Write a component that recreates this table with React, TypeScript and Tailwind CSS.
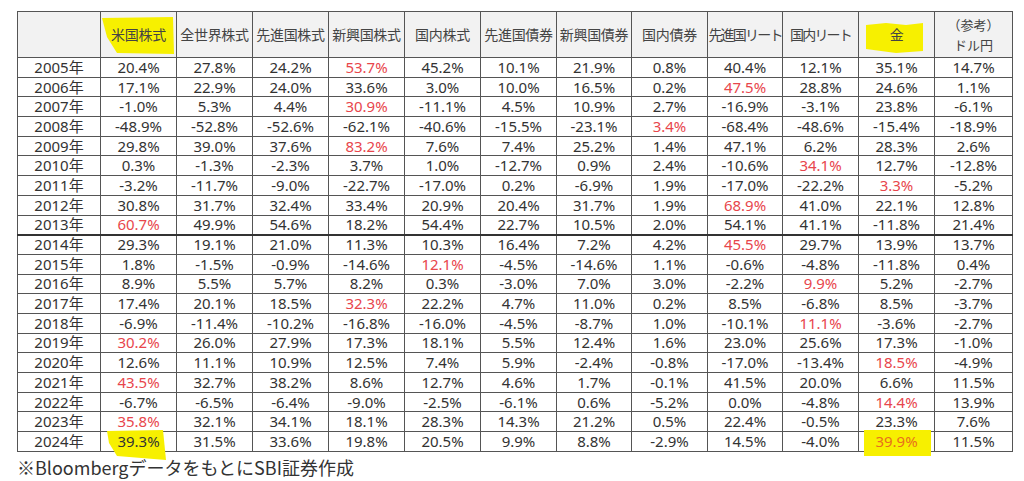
import React from "react";

const headers = ["米国株式", "全世界株式", "先進国株式", "新興国株式", "国内株式", "先進国債券", "新興国債券", "国内債券", "先進国リート", "国内リート", "金"];

const widths = [83, 76, 76, 76, 76, 76, 76, 75, 76, 75, 76, 76, 78];

// [year, values..., index of the red cell]
const rows: [string, string[], number][] = [
  ["2005年", ["20.4%", "27.8%", "24.2%", "53.7%", "45.2%", "10.1%", "21.9%", "0.8%", "40.4%", "12.1%", "35.1%", "14.7%"], 3],
  ["2006年", ["17.1%", "22.9%", "24.0%", "33.6%", "3.0%", "10.0%", "16.5%", "0.2%", "47.5%", "28.8%", "24.6%", "1.1%"], 8],
  ["2007年", ["-1.0%", "5.3%", "4.4%", "30.9%", "-11.1%", "4.5%", "10.9%", "2.7%", "-16.9%", "-3.1%", "23.8%", "-6.1%"], 3],
  ["2008年", ["-48.9%", "-52.8%", "-52.6%", "-62.1%", "-40.6%", "-15.5%", "-23.1%", "3.4%", "-68.4%", "-48.6%", "-15.4%", "-18.9%"], 7],
  ["2009年", ["29.8%", "39.0%", "37.6%", "83.2%", "7.6%", "7.4%", "25.2%", "1.4%", "47.1%", "6.2%", "28.3%", "2.6%"], 3],
  ["2010年", ["0.3%", "-1.3%", "-2.3%", "3.7%", "1.0%", "-12.7%", "0.9%", "2.4%", "-10.6%", "34.1%", "12.7%", "-12.8%"], 9],
  ["2011年", ["-3.2%", "-11.7%", "-9.0%", "-22.7%", "-17.0%", "0.2%", "-6.9%", "1.9%", "-17.0%", "-22.2%", "3.3%", "-5.2%"], 10],
  ["2012年", ["30.8%", "31.7%", "32.4%", "33.4%", "20.9%", "20.4%", "31.7%", "1.9%", "68.9%", "41.0%", "22.1%", "12.8%"], 8],
  ["2013年", ["60.7%", "49.9%", "54.6%", "18.2%", "54.4%", "22.7%", "10.5%", "2.0%", "54.1%", "41.1%", "-11.8%", "21.4%"], 0],
  ["2014年", ["29.3%", "19.1%", "21.0%", "11.3%", "10.3%", "16.4%", "7.2%", "4.2%", "45.5%", "29.7%", "13.9%", "13.7%"], 8],
  ["2015年", ["1.8%", "-1.5%", "-0.9%", "-14.6%", "12.1%", "-4.5%", "-14.6%", "1.1%", "-0.6%", "-4.8%", "-11.8%", "0.4%"], 4],
  ["2016年", ["8.9%", "5.5%", "5.7%", "8.2%", "0.3%", "-3.0%", "7.0%", "3.0%", "-2.2%", "9.9%", "5.2%", "-2.7%"], 9],
  ["2017年", ["17.4%", "20.1%", "18.5%", "32.3%", "22.2%", "4.7%", "11.0%", "0.2%", "8.5%", "-6.8%", "8.5%", "-3.7%"], 3],
  ["2018年", ["-6.9%", "-11.4%", "-10.2%", "-16.8%", "-16.0%", "-4.5%", "-8.7%", "1.0%", "-10.1%", "11.1%", "-3.6%", "-2.7%"], 9],
  ["2019年", ["30.2%", "26.0%", "27.9%", "17.3%", "18.1%", "5.5%", "12.4%", "1.6%", "23.0%", "25.6%", "17.3%", "-1.0%"], 0],
  ["2020年", ["12.6%", "11.1%", "10.9%", "12.5%", "7.4%", "5.9%", "-2.4%", "-0.8%", "-17.0%", "-13.4%", "18.5%", "-4.9%"], 10],
  ["2021年", ["43.5%", "32.7%", "38.2%", "8.6%", "12.7%", "4.6%", "1.7%", "-0.1%", "41.5%", "20.0%", "6.6%", "11.5%"], 0],
  ["2022年", ["-6.7%", "-6.5%", "-6.4%", "-9.0%", "-2.5%", "-6.1%", "0.6%", "-5.2%", "0.0%", "-4.8%", "14.4%", "13.9%"], 10],
  ["2023年", ["35.8%", "32.1%", "34.1%", "18.1%", "28.3%", "14.3%", "21.2%", "0.5%", "22.4%", "-0.5%", "23.3%", "7.6%"], 0],
  ["2024年", ["39.3%", "31.5%", "33.6%", "19.8%", "20.5%", "9.9%", "8.8%", "-2.9%", "14.5%", "-4.0%", "39.9%", "11.5%"], 10],
];

const font = { fontFamily: '"Noto Sans", "Noto Sans CJK JP", sans-serif' };

function Marker({ points, className }: { points: string; className: string }) {
  return (
    <svg className={`absolute pointer-events-none ${className}`} width="80" height="50" viewBox="0 0 80 50">
      <polygon points={points} fill="#f7f000" />
    </svg>
  );
}

export default function App() {
  return (
    <div className="w-[1024px] h-[481px] bg-white text-[#333] pl-[17px] pt-[11px]" style={font}>
      <table className="table-fixed border-collapse w-[995px] text-[15px] leading-none">
        <colgroup>
          {widths.map((w, i) => (
            <col key={i} style={{ width: w }} />
          ))}
        </colgroup>
        <thead>
          <tr className="h-[46px] bg-[#f2f2f2] text-[#444] text-[14px]">
            <th className="border border-[#555]"></th>
            {headers.map((h, i) => (
              <th
                key={h}
                className={`relative border border-[#555] font-normal whitespace-nowrap ${h.includes("リート") ? "tracking-[-1.8px]" : "tracking-[-0.3px]"}`}
              >
                {i === 0 && <Marker className="left-0 top-[3px]" points="1,3 72,2 73,39 16,38 6,22" />}
                {i === 10 && <Marker className="left-[7px] top-[11px]" points="0,2 20,0 40,2 57,0 57,28 30,30 0,26" />}
                <span className="relative">{h}</span>
              </th>
            ))}
            <th className="border border-[#555] font-normal text-[13px] leading-[20px]" style={{ fontFamily: '"Noto Sans CJK JP", sans-serif' }}>
              （参考）
              <br />
              ドル円
            </th>
          </tr>
        </thead>
        <tbody>
          {rows.map(([year, vals, red], r) => (
            <tr key={year} className={`h-[19.7px] ${r === 9 ? "border-t-2 border-t-[#333]" : ""}`}>
              <td className="border border-[#555] text-center">{year}</td>
              {vals.map((v, c) => {
                const isGold = r === 19 && c === 10;
                const isUs = r === 19 && c === 0;
                return (
                  <td
                    key={c}
                    className={`relative border border-[#555] text-center ${c === red && !isGold ? "text-[#e8464c]" : ""} ${isGold ? "text-[#e8701c]" : ""}`}
                  >
                    {isUs && <Marker className="left-[3px] top-[-2px]" points="3,1 59,0 62,30 13,26 5,13" />}
                    {isGold && <span className="absolute left-[5px] right-[3px] top-[-2px] h-[26px] bg-[#f7f000]" />}
                    <span className="relative">{v}</span>
                  </td>
                );
              })}
            </tr>
          ))}
        </tbody>
      </table>
      <p className="mt-[3px] text-[18px] leading-[24px] text-[#333]" style={{ fontFamily: '"Noto Sans CJK JP", sans-serif' }}>
        ※BloombergデータをもとにSBI証券作成
      </p>
    </div>
  );
}
